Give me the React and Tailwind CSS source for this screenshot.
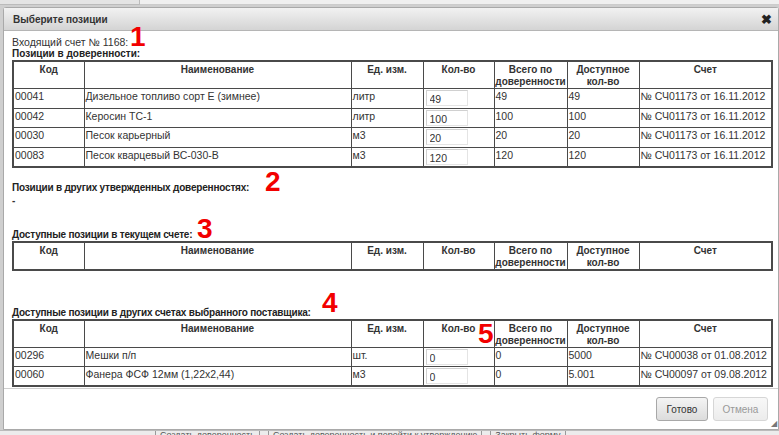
import React from 'react';

const cols = [
  { key: 'code', label: 'Код', w: 'w-[71px]' },
  { key: 'name', label: 'Наименование', w: 'w-[267px]' },
  { key: 'unit', label: 'Ед. изм.', w: 'w-[72px]' },
  { key: 'qty', label: 'Кол-во', w: 'w-[71px]' },
  { key: 'total', label: 'Всего по доверенности', w: 'w-[73px]' },
  { key: 'avail', label: 'Доступное кол-во', w: 'w-[72px]' },
  { key: 'bill', label: 'Счет', w: 'w-[133px]' },
];

const rows1 = [
  ['00041', 'Дизельное топливо сорт Е (зимнее)', 'литр', '49', '49', '49', '№ СЧ01173 от 16.11.2012'],
  ['00042', 'Керосин ТС-1', 'литр', '100', '100', '100', '№ СЧ01173 от 16.11.2012'],
  ['00030', 'Песок карьерный', 'м3', '20', '20', '20', '№ СЧ01173 от 16.11.2012'],
  ['00083', 'Песок кварцевый ВС-030-В', 'м3', '120', '120', '120', '№ СЧ01173 от 16.11.2012'],
];

const rows4 = [
  ['00296', 'Мешки п/п', 'шт.', '0', '0', '5000', '№ СЧ00038 от 01.08.2012'],
  ['00060', 'Фанера ФСФ 12мм (1,22х2,44)', 'м3', '0', '0', '5.001', '№ СЧ00097 от 09.08.2012'],
];

const Grid = ({ rows }) => (
  <table className="border-collapse border-2 border-[#4a4a4a] table-fixed w-[759px]">
    <thead>
      <tr className="h-[26px]">
        {cols.map((c) => (
          <th
            key={c.key}
            className={`${c.w} border border-[#4a4a4a] align-top p-0 pt-[2px] font-bold text-[10px] leading-[12px] text-[#333] text-center`}
          >
            {c.key === 'total' ? (
              <span className="whitespace-nowrap">Всего по<br />доверенности</span>
            ) : c.key === 'avail' ? (
              <span>Доступное<br />кол-во</span>
            ) : (
              c.label
            )}
          </th>
        ))}
      </tr>
    </thead>
    <tbody>
      {rows.map((r, i) => (
        <tr key={i} className="h-[19.5px]">
          {r.map((v, j) => (
            <td
              key={j}
              className="border border-[#4a4a4a] align-top p-0 pl-[1px] pt-[1px] text-[10.5px] leading-[12px] text-[#333] whitespace-nowrap overflow-hidden"
            >
              {j === 3 ? (
                <div className="pl-[1px]">
                  <input
                    readOnly
                    value={v}
                    className="block w-[42px] h-[16px] border border-[#e4e4e4] border-t-[#d0d0d0] border-l-[#d0d0d0] bg-white px-[3px] pt-[2px] text-[10.5px] text-[#333] outline-none"
                  />
                </div>
              ) : (
                v
              )}
            </td>
          ))}
        </tr>
      ))}
    </tbody>
  </table>
);

// red callout numbers drawn over the form
const Mark = ({ n, className }) => (
  <span className={`absolute z-10 text-[28px] font-bold leading-none text-[#f20000] ${className}`}>{n}</span>
);

export default function App() {
  return (
    <div
      className="w-[779px] h-[435px] overflow-hidden bg-[#cfcfcf] flex flex-col"
      style={{ fontFamily: '"Liberation Sans", Arial, sans-serif' }}
    >
      {/* top strip behind the dialog */}
      <div className="h-[7px] shrink-0 flex">
        <div className="w-[140px] h-[5px] bg-[#e4e4e4] border-r border-b border-[#bbb]" />
        <div className="flex-1 h-[5px] bg-[#f0f0f0] border-b border-[#ccc]" />
      </div>

      <div className="ml-[3px] h-[423px] shrink-0 flex flex-col bg-white border border-[#a9a9a9] rounded-t-[3px] relative">
        {/* title bar */}
        <div className="h-[23px] shrink-0 flex items-center justify-between pl-[9px] pr-[6px] bg-gradient-to-b from-[#f2f2f2] to-[#d4d4d4] border-b border-[#b5b5b5]">
          <span className="text-[10px] font-bold text-[#333]">Выберите позиции</span>
          <span className="text-[13px] font-bold text-[#222] leading-none">✖</span>
        </div>

        {/* content */}
        <div className="flex-1 min-h-0 relative pl-[8px] pt-[6px] text-[#333]">
          <div className="text-[10.5px] leading-[11px]">Входящий счет № 1168:</div>
          <div className="text-[10px] font-bold leading-[12px] text-[#222]">Позиции в доверенности:</div>
          <Grid rows={rows1} />

          <div className="text-[10px] font-bold leading-[12px] tracking-[-0.2px] text-[#222] mt-[14px]">Позиции в других утвержденных доверенностях:</div>
          <div className="text-[10px] leading-[14px] font-bold">-</div>

          <div className="text-[10px] font-bold leading-[12px] tracking-[-0.2px] text-[#222] mt-[21px]">Доступные позиции в текущем счете:</div>
          <Grid rows={[]} />

          <div className="text-[10px] font-bold leading-[12px] tracking-[-0.2px] text-[#222] mt-[36px]">Доступные позиции в других счетах выбранного поставщика:</div>
          <Grid rows={rows4} />

          <Mark n="1" className="left-[126px] top-[-8px]" />
          <Mark n="2" className="left-[261px] top-[137px]" />
          <Mark n="3" className="left-[193px] top-[184px]" />
          <Mark n="4" className="left-[318px] top-[258px]" />
          <Mark n="5" className="left-[474px] top-[289px]" />
        </div>

        {/* footer */}
        <div className="h-[41px] shrink-0 border-t border-[#cfcfcf] flex items-center justify-end gap-[5px] pr-[10px]">
          <button className="h-[24px] w-[52px] rounded-[3px] border border-[#a8a8a8] bg-gradient-to-b from-[#f4f4f4] to-[#dcdcdc] text-[10px] text-[#333]">
            Готово
          </button>
          <button className="h-[24px] w-[55px] rounded-[3px] border border-[#d6d6d6] bg-gradient-to-b from-[#f8f8f8] to-[#ececec] text-[10px] text-[#999]">
            Отмена
          </button>
        </div>
        <span className="absolute right-[1px] bottom-[1px] text-[8px] leading-none text-[#777]">◢</span>
      </div>

      {/* bottom strip behind the dialog */}
      <div className="flex-1 bg-[#ececec] border-t border-[#bbb] flex items-start pl-[155px] gap-[8px] overflow-hidden">
        <span className="text-[9px] leading-[9px] text-[#555] border-x border-[#999] px-[4px]">Создать доверенность</span>
        <span className="text-[9px] leading-[9px] text-[#555] border-x border-[#999] px-[4px]">Создать доверенность и перейти к утверждению</span>
        <span className="text-[9px] leading-[9px] text-[#555] border-x border-[#999] px-[4px]">Закрыть форму</span>
      </div>
    </div>
  );
}
